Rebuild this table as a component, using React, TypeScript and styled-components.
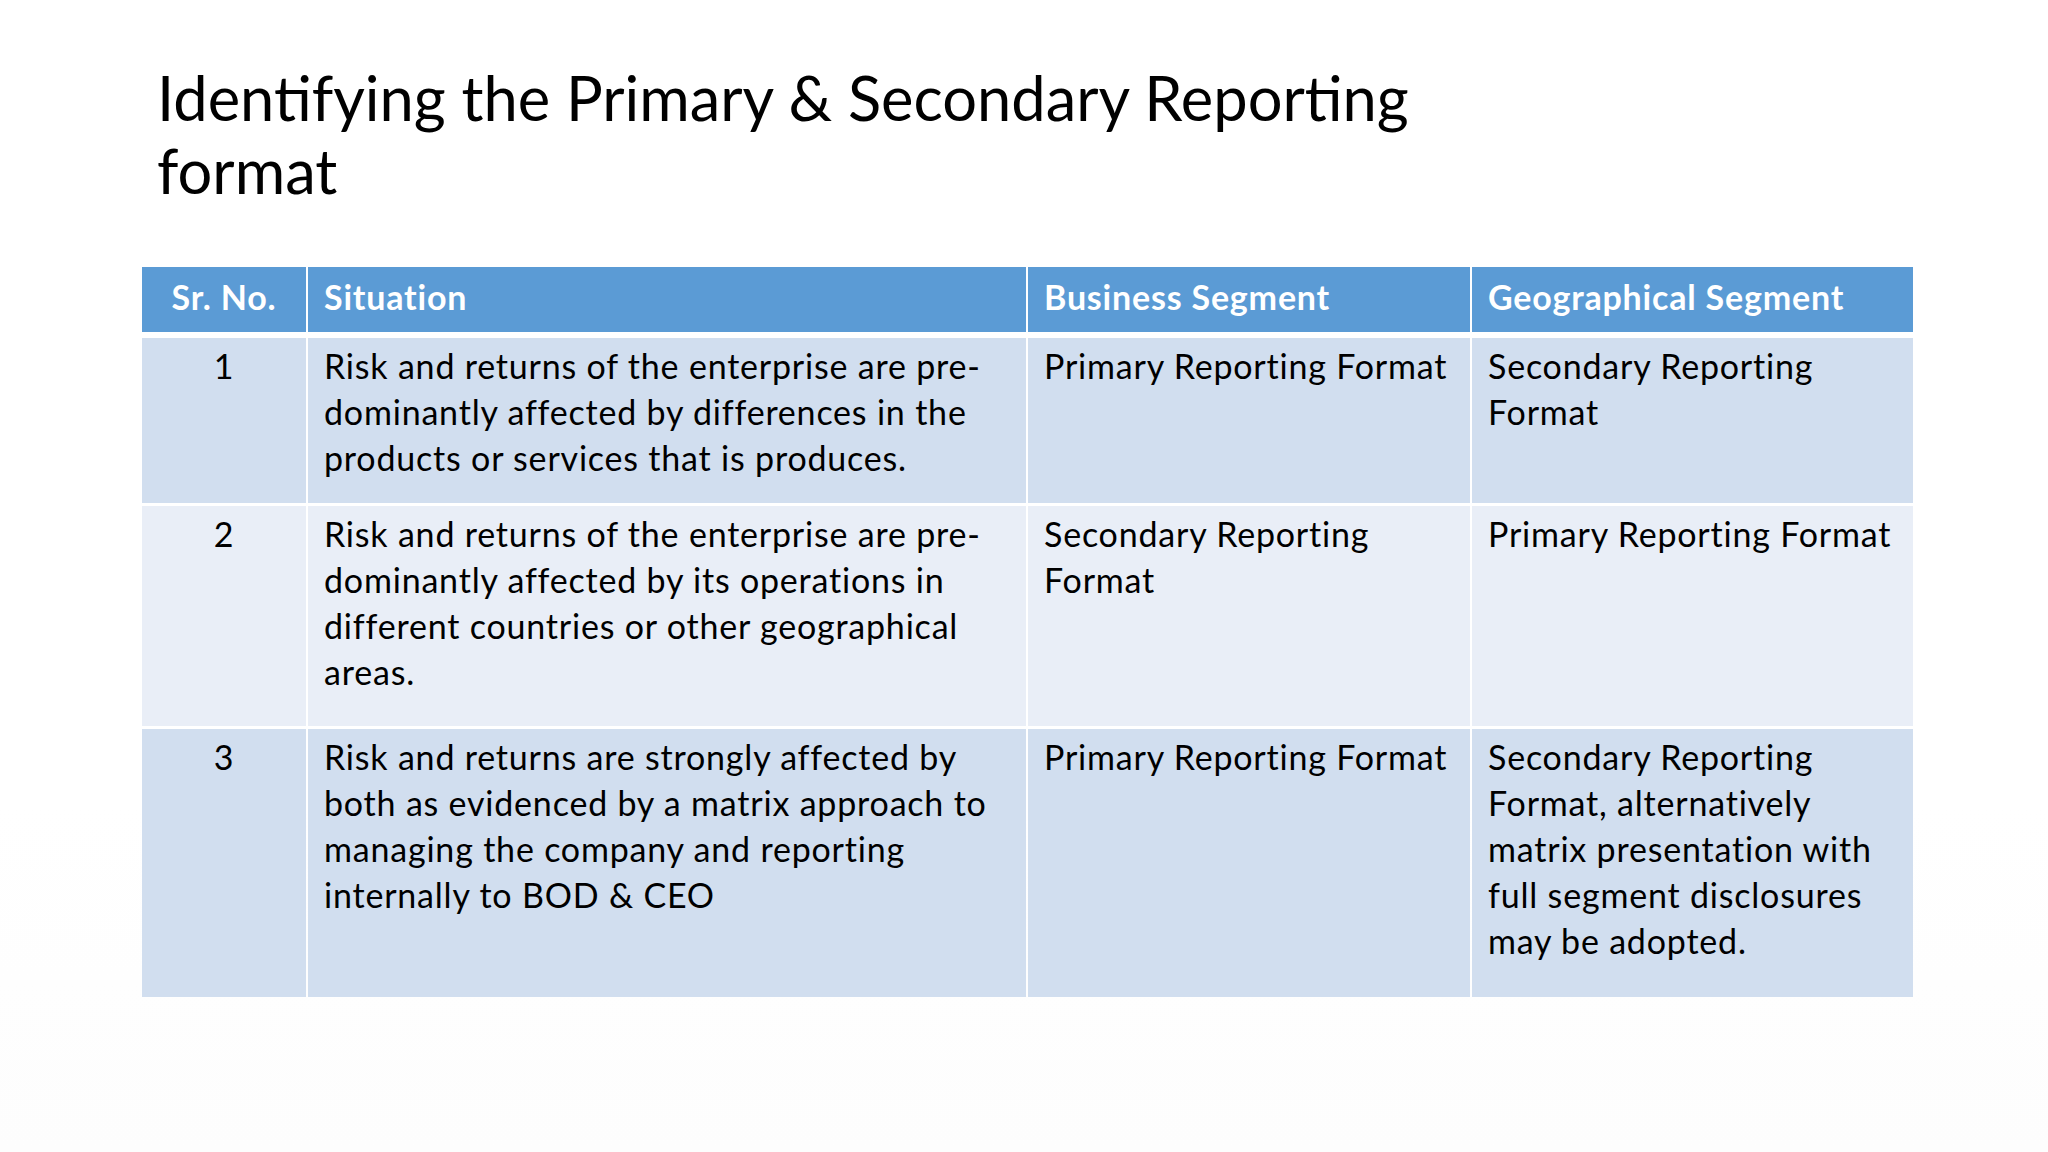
import React from 'react';
import styled, { createGlobalStyle } from 'styled-components';

type Row = {
  no: string;
  situation: string[];
  business: string[];
  geographical: string[];
  height: number;
};

const rows: Row[] = [
  {
    no: '1',
    situation: [
      'Risk and returns of the enterprise are pre-',
      'dominantly affected by differences in the',
      'products or services that is produces.',
    ],
    business: ['Primary Reporting Format'],
    geographical: ['Secondary Reporting', 'Format'],
    height: 165,
  },
  {
    no: '2',
    situation: [
      'Risk and returns of the enterprise are pre-',
      'dominantly affected by its operations in',
      'different countries or other geographical',
      'areas.',
    ],
    business: ['Secondary Reporting', 'Format'],
    geographical: ['Primary Reporting Format'],
    height: 220,
  },
  {
    no: '3',
    situation: [
      'Risk and returns are strongly affected by',
      'both as evidenced by a matrix approach to',
      'managing the company and reporting',
      'internally to BOD & CEO',
    ],
    business: ['Primary Reporting Format'],
    geographical: [
      'Secondary Reporting',
      'Format, alternatively',
      'matrix presentation with',
      'full segment disclosures',
      'may be adopted.',
    ],
    height: 268,
  },
];

const App = () => {
  return (
    <Slide>
      <GlobalStyle />
      <Title>
        Identifying the Primary &amp; Secondary Reporting
        <br />
        format
      </Title>
      <Table>
        <HeaderRow>
          <HeadCell center>Sr. No.</HeadCell>
          <HeadCell>Situation</HeadCell>
          <HeadCell>Business Segment</HeadCell>
          <HeadCell>Geographical Segment</HeadCell>
        </HeaderRow>
        {rows.map((row, i) => (
          <BodyRow key={row.no} banded={i % 2 === 1} height={row.height}>
            <Cell center>{row.no}</Cell>
            <Cell>
              {row.situation.map((l) => (
                <Line key={l}>{l}</Line>
              ))}
            </Cell>
            <Cell>
              {row.business.map((l) => (
                <Line key={l}>{l}</Line>
              ))}
            </Cell>
            <Cell>
              {row.geographical.map((l) => (
                <Line key={l}>{l}</Line>
              ))}
            </Cell>
          </BodyRow>
        ))}
      </Table>
    </Slide>
  );
};

const GlobalStyle = createGlobalStyle`
  html, body {
    margin: 0;
    padding: 0;
    background: #ffffff;
  }
  body {
    font-family: Lato, "Open Sans", sans-serif;
    color: #000;
  }
`;

const Slide = styled.div`
  width: 2048px;
  height: 1152px;
  box-sizing: border-box;
  padding: 61px 0 0 142px;
  background: linear-gradient(180deg, #ffffff 0%, #ffffff 70%, #fdfdfd 100%);
  overflow: hidden;
`;

const Title = styled.h1`
  margin: 0 0 60px 15px;
  font-weight: 400;
  font-size: 61.4px;
  line-height: 73px;
  color: #000;
`;

const columns = '164px 718px 442px 441px';

const Table = styled.div`
  display: flex;
  flex-direction: column;
  gap: 3px;
  width: 1771px;
`;

const HeaderRow = styled.div`
  display: grid;
  grid-template-columns: ${columns};
  column-gap: 2px;
  height: 65px;
  margin-bottom: 3px;
`;

const BodyRow = styled.div<{ banded: boolean; height: number }>`
  display: grid;
  grid-template-columns: ${columns};
  column-gap: 2px;
  height: ${(p) => p.height}px;
  & > div {
    background: ${(p) => (p.banded ? '#e9eef7' : '#d1deef')};
  }
`;

const HeadCell = styled.div<{ center?: boolean }>`
  background: #5b9bd5;
  color: #ffffff;
  font-weight: 700;
  font-size: 34px;
  letter-spacing: 0.8px;
  line-height: 46px;
  padding: 7px 10px 0 ${(p) => (p.center ? '10px' : '16px')};
  text-align: ${(p) => (p.center ? 'center' : 'left')};
`;

const Cell = styled.div<{ center?: boolean }>`
  font-size: 34px;
  letter-spacing: 0.8px;
  line-height: 46px;
  padding: 5px 10px 0 ${(p) => (p.center ? '10px' : '16px')};
  text-align: ${(p) => (p.center ? 'center' : 'left')};
`;

const Line = styled.span`
  display: block;
  white-space: nowrap;
`;

export default App;
